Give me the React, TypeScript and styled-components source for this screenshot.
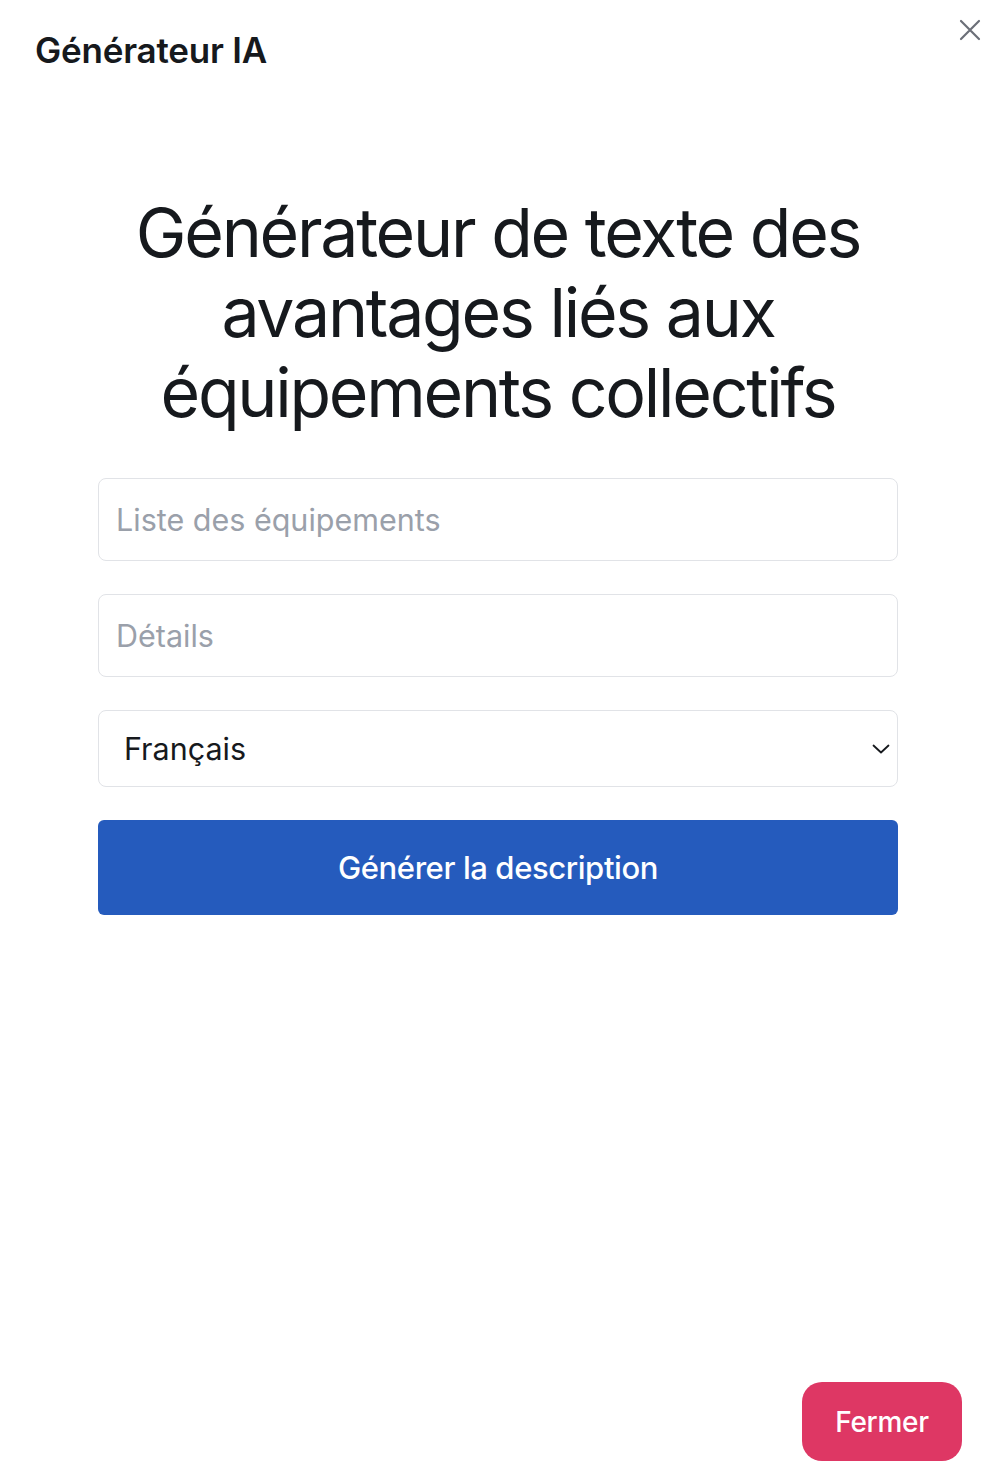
import React from "react";
import styled, { createGlobalStyle } from "styled-components";

const Global = createGlobalStyle`
  html, body { margin: 0; padding: 0; background: #ffffff; }
  body { font-family: Inter, "Noto Sans", "Liberation Sans", sans-serif; color: #16191d; }
  * { box-sizing: border-box; }
`;

const Page = styled.div`
  width: 992px;
  min-height: 1480px;
  display: flex;
  flex-direction: column;
`;

const Header = styled.header`
  display: flex;
  align-items: flex-start;
  justify-content: space-between;
  padding: 28px 4px 0 35px;
  height: 120px;
`;

const Title = styled.h5`
  margin: 0;
  font-size: 35px;
  font-weight: 600;
  line-height: 44px;
  letter-spacing: -0.2px;
  color: #16191d;
`;

const CloseButton = styled.button`
  border: none;
  background: transparent;
  padding: 0;
  width: 36px;
  height: 36px;
  margin-top: -16px;
  display: flex;
  align-items: center;
  justify-content: center;
  color: #6b6f78;
  cursor: pointer;
`;

const Body = styled.main`
  flex: 1;
  display: flex;
  flex-direction: column;
  align-items: center;
  padding-left: 4px;
  padding-top: 72px;
`;

const Heading = styled.h1`
  margin: 0 0 46px;
  width: 800px;
  text-align: center;
  font-size: 68px;
  font-weight: 400;
  line-height: 80px;
  letter-spacing: -2.25px;
  color: #16191d;
`;

const Form = styled.form`
  width: 800px;
  display: flex;
  flex-direction: column;
  gap: 33px;
`;

const Field = styled.input`
  width: 100%;
  height: 83px;
  border: 1.5px solid #e1e3e7;
  border-radius: 8px;
  padding: 0 17px;
  font-family: inherit;
  font-size: 30.5px;
  color: #16191d;
  background: #fff;
  outline: none;
  &::placeholder { color: #9aa0aa; }
`;

const SelectWrap = styled.div`
  position: relative;
  width: 100%;
`;

const Select = styled.select`
  width: 100%;
  height: 77px;
  appearance: none;
  border: 1.5px solid #e1e3e7;
  border-radius: 8px;
  padding: 0 25px;
  font-family: inherit;
  font-size: 30.5px;
  color: #16191d;
  background: #fff;
  outline: none;
`;

const Chevron = styled.svg`
  position: absolute;
  right: 7px;
  top: 50%;
  transform: translateY(-50%);
  pointer-events: none;
`;

const PrimaryButton = styled.button`
  width: 100%;
  height: 95px;
  border: none;
  border-radius: 6px;
  background: #255bbd;
  color: #fff;
  font-family: inherit;
  font-size: 31px;
  font-weight: 500;
  letter-spacing: -0.4px;
  cursor: pointer;
`;

const Footer = styled.footer`
  display: flex;
  justify-content: flex-end;
  padding: 0 30px 19px 0;
`;

const DangerButton = styled.button`
  width: 160px;
  height: 79px;
  border: none;
  border-radius: 20px;
  background: #de3764;
  color: #fff;
  font-family: inherit;
  font-size: 28px;
  font-weight: 500;
  letter-spacing: -0.3px;
  cursor: pointer;
`;

export default function App() {
  return (
    <Page>
      <Global />
      <Header>
        <Title>Générateur IA</Title>
        <CloseButton aria-label="Fermer">
          <svg width="22" height="22" viewBox="0 0 22 22" fill="none" stroke="currentColor" strokeWidth="2.2" strokeLinecap="round">
            <path d="M2 2 L20 20 M20 2 L2 20" />
          </svg>
        </CloseButton>
      </Header>
      <Body>
        <Heading>Générateur de texte des avantages liés aux équipements collectifs</Heading>
        <Form onSubmit={(e) => e.preventDefault()}>
          <Field placeholder="Liste des équipements" />
          <Field placeholder="Détails" />
          <SelectWrap>
            <Select defaultValue="fr">
              <option value="fr">Français</option>
              <option value="en">English</option>
            </Select>
            <Chevron width="20" height="20" viewBox="0 0 20 20" fill="none" stroke="#16191d" strokeWidth="1.8" strokeLinecap="round" strokeLinejoin="round">
              <path d="M2.5 6.5 L10 13.5 L17.5 6.5" />
            </Chevron>
          </SelectWrap>
          <PrimaryButton type="submit">Générer la description</PrimaryButton>
        </Form>
      </Body>
      <Footer>
        <DangerButton type="button">Fermer</DangerButton>
      </Footer>
    </Page>
  );
}
